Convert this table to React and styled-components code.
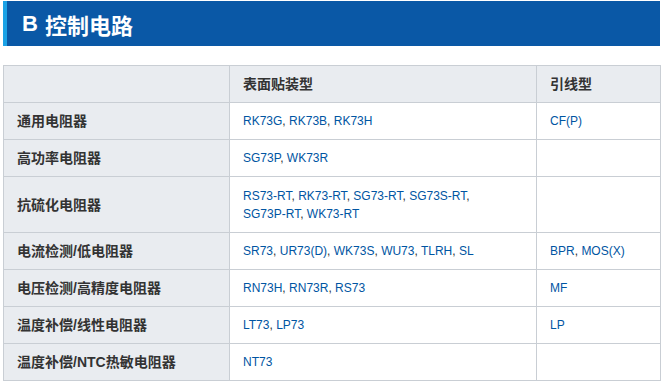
import React from "react";
import styled, { createGlobalStyle } from "styled-components";

const Global = createGlobalStyle`
  html, body { margin: 0; padding: 0; background: #fff; }
  body { font-family: "Liberation Sans", Arial, "Noto Sans CJK SC", sans-serif; }
`;

const Page = styled.div`
  width: 657px;
  margin: 1px 3px 0;
`;

const TitleBar = styled.h2`
  margin: 0;
  height: 45px;
  display: flex;
  align-items: center;
  background: #0a58a6;
  border-left: 4px solid #1aa2e6;
  padding-left: 15px;
  color: #fff;
  font-family: "Liberation Sans", Arial, "Noto Sans CJK SC", sans-serif;
  font-size: 22px;
  font-weight: bold;
`;

const Letter = styled.span`
  margin-right: 7px;
`;

const Table = styled.table`
  margin-top: 19px;
  width: 657px;
  border-collapse: collapse;
  table-layout: fixed;
  border: 1px solid #c9ced4;
`;

const Cell = styled.td`
  border: 1px solid #c9ced4;
  height: ${(p) => (p.$tall ? 56 : 37)}px;
  padding: 0 13px;
  box-sizing: border-box;
  vertical-align: middle;
  text-align: left;
  font-size: 12px;
  line-height: 18px;
  color: #0055a2;
  background: #fff;
`;

const Head = styled(Cell).attrs({ as: "th" })`
  background: #e9ecf0;
  color: #333;
  font-weight: bold;
  font-size: 14px;
`;

const Item = styled.span`
  white-space: nowrap;
`;

const Link = styled.a`
  color: #0055a2;
  text-decoration: none;
`;

const Sep = styled.span`
  color: #333;
`;

const rows = [
  { name: "通用电阻器", smd: ["RK73G", "RK73B", "RK73H"], lead: ["CF(P)"] },
  { name: "高功率电阻器", smd: ["SG73P", "WK73R"], lead: [] },
  {
    name: "抗硫化电阻器",
    smd: ["RS73-RT", "RK73-RT", "SG73-RT", "SG73S-RT", "SG73P-RT", "WK73-RT"],
    lead: [],
    tall: true,
  },
  { name: "电流检测/低电阻器", smd: ["SR73", "UR73(D)", "WK73S", "WU73", "TLRH", "SL"], lead: ["BPR", "MOS(X)"] },
  { name: "电压检测/高精度电阻器", smd: ["RN73H", "RN73R", "RS73"], lead: ["MF"] },
  { name: "温度补偿/线性电阻器", smd: ["LT73", "LP73"], lead: ["LP"] },
  { name: "温度补偿/NTC热敏电阻器", smd: ["NT73"], lead: [] },
];

const Links = ({ items }) =>
  items.map((t, i) => (
    <React.Fragment key={t}>
      <Item>
        <Link href="#">{t}</Link>
        {i < items.length - 1 && <Sep>,</Sep>}
      </Item>
      {i < items.length - 1 && " "}
    </React.Fragment>
  ));

export default function App() {
  return (
    <Page>
      <Global />
      <TitleBar>
        <Letter>B</Letter>控制电路
      </TitleBar>
      <Table>
        <colgroup>
          <col style={{ width: 226 }} />
          <col style={{ width: 307 }} />
          <col style={{ width: 124 }} />
        </colgroup>
        <thead>
          <tr>
            <Head></Head>
            <Head>表面贴装型</Head>
            <Head>引线型</Head>
          </tr>
        </thead>
        <tbody>
          {rows.map((r) => (
            <tr key={r.name}>
              <Head $tall={r.tall}>{r.name}</Head>
              <Cell $tall={r.tall}>
                <Links items={r.smd} />
              </Cell>
              <Cell $tall={r.tall}>
                <Links items={r.lead} />
              </Cell>
            </tr>
          ))}
        </tbody>
      </Table>
    </Page>
  );
}
